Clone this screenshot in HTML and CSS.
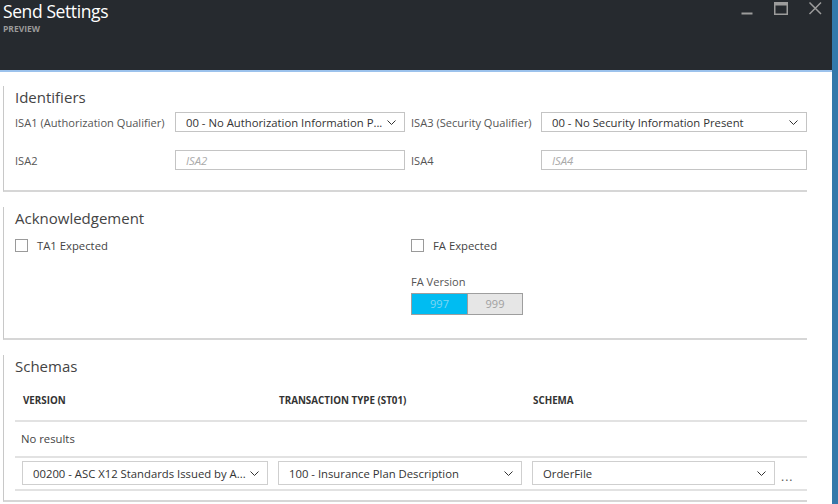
FILE: index.html
```html
<!DOCTYPE html>
<html>
<head>
<meta charset="utf-8">
<link rel="stylesheet" href="styles.css">
</head>
<body>
<div class="page">
  <div class="blade">
    <header class="titlebar">
      <div class="title-group">
        <div class="title">Send Settings</div>
        <div class="subtitle">PREVIEW</div>
      </div>
      <div class="controls">
        <svg class="ctrl" viewBox="0 0 34 18"><line x1="11.5" y1="13.5" x2="22.5" y2="13.5" stroke="#9c9c9c" stroke-width="2"/></svg>
        <svg class="ctrl" viewBox="0 0 34 18"><rect x="10.75" y="2.75" width="12.5" height="11.5" fill="none" stroke="#9c9c9c" stroke-width="1.5"/><rect x="10" y="2" width="14" height="3.5" fill="#9c9c9c"/></svg>
        <svg class="ctrl" viewBox="0 0 34 18"><path d="M11.5 2.5 L23 14 M23 2.5 L11.5 14" stroke="#9c9c9c" stroke-width="1.5" fill="none"/></svg>
      </div>
    </header>
    <main class="content">
      <section class="section sec-ids">
        <h2 class="section-title">Identifiers</h2>
        <div class="ids-grid">
          <div class="label">ISA1 (Authorization Qualifier)</div>
          <div class="field select"><span class="value">00 - No Authorization Information P...</span><svg class="chev" viewBox="0 0 9 5"><polyline points="0.5,0.5 4.5,4.5 8.5,0.5" fill="none" stroke="#333" stroke-width="1"/></svg></div>
          <div class="label label-second">ISA3 (Security Qualifier)</div>
          <div class="field select"><span class="value">00 - No Security Information Present</span><svg class="chev" viewBox="0 0 9 5"><polyline points="0.5,0.5 4.5,4.5 8.5,0.5" fill="none" stroke="#333" stroke-width="1"/></svg></div>
          <div class="label">ISA2</div>
          <div class="field"><span class="placeholder">ISA2</span></div>
          <div class="label label-second">ISA4</div>
          <div class="field"><span class="placeholder">ISA4</span></div>
        </div>
      </section>

      <section class="section sec-ack">
        <h2 class="section-title">Acknowledgement</h2>
        <div class="ack-grid">
          <div class="ack-col">
            <label class="check"><span class="box"></span>TA1 Expected</label>
          </div>
          <div class="ack-col">
            <label class="check"><span class="box"></span>FA Expected</label>
            <div class="label fa-label">FA Version</div>
            <div class="toggle">
              <span class="opt opt-on">997</span>
              <span class="opt opt-off">999</span>
            </div>
          </div>
        </div>
      </section>

      <section class="section sec-schemas">
        <h2 class="section-title">Schemas</h2>
        <div class="table">
          <div class="thead">
            <div class="th">VERSION</div>
            <div class="th">TRANSACTION TYPE (ST01)</div>
            <div class="th">SCHEMA</div>
          </div>
          <div class="empty">No results</div>
          <div class="trow">
            <div class="td">
              <div class="field select tall"><span class="value">00200 - ASC X12 Standards Issued by A...</span><svg class="chev" viewBox="0 0 9 5"><polyline points="0.5,0.5 4.5,4.5 8.5,0.5" fill="none" stroke="#333" stroke-width="1"/></svg></div>
            </div>
            <div class="td">
              <div class="field select tall"><span class="value">100 - Insurance Plan Description</span><svg class="chev" viewBox="0 0 9 5"><polyline points="0.5,0.5 4.5,4.5 8.5,0.5" fill="none" stroke="#333" stroke-width="1"/></svg></div>
            </div>
            <div class="td td-last">
              <div class="field select tall"><span class="value">OrderFile</span><svg class="chev" viewBox="0 0 9 5"><polyline points="0.5,0.5 4.5,4.5 8.5,0.5" fill="none" stroke="#333" stroke-width="1"/></svg></div>
              <span class="more">...</span>
            </div>
          </div>
        </div>
      </section>
    </main>
  </div>
  <div class="edge"></div>
</div>
</body>
</html>
```

FILE: styles.css
```css
* { box-sizing: border-box; }
html, body { margin: 0; padding: 0; }
body {
  font-family: "Open Sans", "Noto Sans", sans-serif;
  width: 838px;
  height: 504px;
  overflow: hidden;
  background: #fff;
}
.page { display: flex; height: 504px; overflow: hidden; }
.blade { flex: 1; display: flex; flex-direction: column; min-width: 0; }
.edge { width: 6px; flex: none; background: #3479aa; }

.titlebar {
  flex: none;
  height: 72px;
  background: #262a2f;
  border-bottom: 2px solid #9cc2ec;
  display: flex;
  justify-content: space-between;
  align-items: flex-start;
  padding-left: 3px;
}
.title { color: #fff; font-size: 17.5px; line-height: 22px; letter-spacing: -0.4px; }
.subtitle { color: #9a9a9a; font-size: 8.5px; font-weight: 700; line-height: 10px; margin-top: 2px; }
.controls { display: flex; }
.ctrl { width: 34px; height: 18px; display: block; }

.content { flex: none; padding: 14px 25px 0 3px; }
.section {
  border-left: 1px solid #c8c8c8;
  border-bottom: 2px solid #d6d6d6;
  padding: 1px 0 20px 11px;
  margin-bottom: 15px;
}
.section-title { font-size: 15px; line-height: 20px; color: #444; font-weight: 400; margin: 0; }

.label { font-size: 11.1px; color: #555; white-space: nowrap; }
.label-second { padding-left: 6px; }

.ids-grid {
  display: grid;
  grid-template-columns: 160px 230px 136px 1fr;
  row-gap: 18px;
  align-items: center;
  margin-top: 5px;
}
.field {
  height: 20px;
  border: 1px solid #c4c4c4;
  display: flex;
  align-items: center;
  padding: 0 8px 0 10px;
  font-size: 11.3px;
  color: #333;
  background: #fff;
  min-width: 0;
}
.field.tall { height: 24px; padding-left: 10px; border-color: #cfcfcf; }
.value { flex: 1; min-width: 0; white-space: nowrap; overflow: hidden; text-overflow: ellipsis; }
.chev { width: 9px; height: 5px; flex: none; margin-left: 2px; }
.placeholder { font-style: italic; color: #aaa; }

.sec-ack { padding-bottom: 23px; }
.ack-grid { display: grid; grid-template-columns: 396px 1fr; margin-top: 10px; }
.ack-col { display: flex; flex-direction: column; align-items: flex-start; }
.check { display: flex; align-items: center; gap: 9px; font-size: 11.3px; color: #444; height: 14px; }
.box { width: 13px; height: 13px; border: 1px solid #9a9a9a; background: #fff; }
.fa-label { margin-top: 23px; line-height: 14px; }
.toggle { display: flex; margin-top: 4px; border: 1px solid #9e9e9e; }
.opt { width: 55px; height: 20px; line-height: 20px; text-align: center; font-size: 11px; }
.opt-on { background: #00bcf2; color: #7fd6f3; }
.opt-off { background: #e6e6e6; color: #a0a0a0; border-left: 1px solid #9e9e9e; }

.sec-schemas { padding-bottom: 9px; }
.thead, .trow { display: grid; grid-template-columns: 256px 254px 1fr; }
.thead {
  padding: 19px 0 13px;
  border-bottom: 2px solid #e2e2e2;
  font-size: 9.8px;
  font-weight: 700;
  color: #333;
  line-height: 12px;
}
.th { padding-left: 8px; white-space: nowrap; }
.empty {
  height: 36px;
  line-height: 34px;
  padding-left: 6px;
  border-bottom: 2px solid #e2e2e2;
  font-size: 11.3px;
  color: #444;
}
.trow { padding: 3px 0 4px; border-bottom: 2px solid #e2e2e2; }
.td { padding: 0 3px 0 7px; min-width: 0; }
.td-last { display: flex; align-items: center; padding-right: 0; }
.td-last .field { flex: 1; }
.more { width: 32px; padding-left: 6px; font-size: 12px; color: #555; letter-spacing: 1px; padding-top: 6px; }
```
